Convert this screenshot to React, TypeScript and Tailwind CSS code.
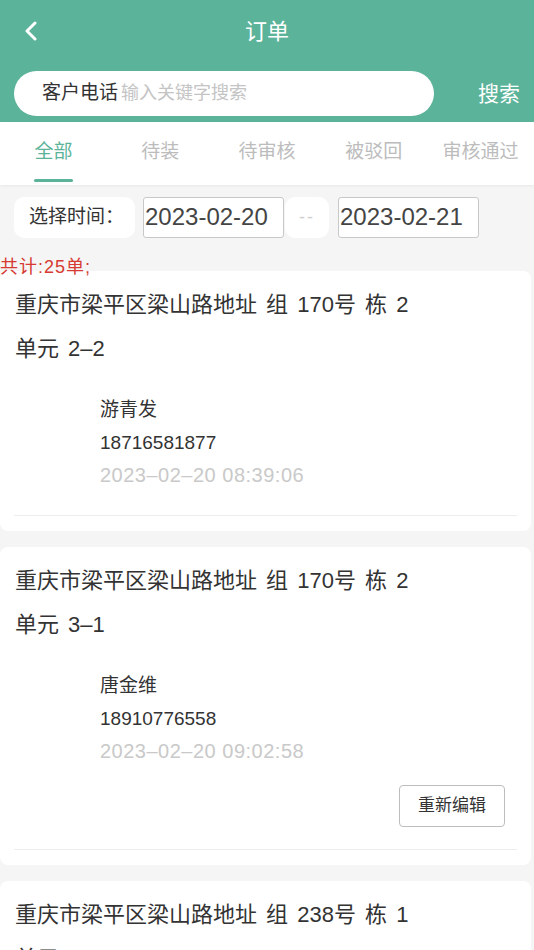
import React from 'react'

type Order = {
  address: string
  unit: string
  name: string
  phone: string
  time: string
  canEdit?: boolean
}

const orders: Order[] = [
  { address: '重庆市梁平区梁山路地址 组 170号 栋 2', unit: '单元 2–2', name: '游青发', phone: '18716581877', time: '2023–02–20 08:39:06' },
  { address: '重庆市梁平区梁山路地址 组 170号 栋 2', unit: '单元 3–1', name: '唐金维', phone: '18910776558', time: '2023–02–20 09:02:58', canEdit: true },
  { address: '重庆市梁平区梁山路地址 组 238号 栋 1', unit: '单元 2–1', name: '李华', phone: '13908231456', time: '2023–02–20 10:15:32' },
]

const tabs = ['全部', '待装', '待审核', '被驳回', '审核通过']

const OrderCard = ({ order }: { order: Order }) => {
  return (
    <div className='bg-white rounded-[8px] w-[531px] pt-[12px] mb-[16px]'>
      <div className='px-[15px] text-[22px] leading-[44px] text-[#333] [word-spacing:3px]'>
        <p>{order.address}</p>
        <p>{order.unit}</p>
      </div>
      <div className='pl-[100px] mt-[22px] text-[19px] leading-[33px]'>
        <p className='text-[#333]'>{order.name}</p>
        <p className='text-[#333]'>{order.phone}</p>
        <p className='text-[20px] tracking-[0.5px] text-[#c9c9c9]'>{order.time}</p>
      </div>
      {order.canEdit ? (
        <div className='flex justify-end pr-[26px] mt-[17px] mb-[22px]'>
          <button className='w-[106px] h-[42px] border border-[#bdbdbd] rounded-[4px] text-[17px] text-[#333] bg-white'>重新编辑</button>
        </div>
      ) : (
        <div className='h-[23px]'></div>
      )}
      <div className='mx-[14px] h-px bg-[#ededed]'></div>
      <div className='h-[15px]'></div>
    </div>
  )
}

const App = () => {
  return (
    <div className='w-[534px] h-[950px] overflow-hidden bg-[#f5f5f5]' style={{ fontFamily: '"Liberation Sans", "Noto Sans CJK SC", sans-serif' }}>
      <div className='bg-[#5bb39a] h-[122px]'>
        <div className='relative h-[62px] flex items-center justify-center'>
          <svg className='absolute left-[23px] top-[21px]' width='16' height='20' viewBox='0 0 16 20' fill='none'>
            <path d='M12 2 L4 10 L12 18' stroke='white' strokeWidth='3' strokeLinecap='round' strokeLinejoin='round' />
          </svg>
          <h1 className='text-white text-[22px]'>订单</h1>
        </div>
        <div className='flex items-center mt-[9px]'>
          <div className='ml-[14px] w-[420px] h-[45px] bg-white rounded-full flex items-center pl-[28px]'>
            <span className='text-[19px] text-[#333]'>客户电话</span>
            <span className='text-[18px] text-[#c4c4c4] ml-[3px]'>输入关键字搜索</span>
          </div>
          <span className='ml-auto mr-[14px] text-white text-[21px]'>搜索</span>
        </div>
      </div>

      <div className='bg-white h-[63px] grid grid-cols-5 shadow-[0_1px_3px_rgba(0,0,0,0.06)] relative'>
        {tabs.map((t, i) => (
          <div key={t} className='flex flex-col items-center justify-start pt-[17px]'>
            <span className={`text-[19px] leading-[26px] ${i === 0 ? 'text-[#5bb39a]' : 'text-[#bcbcbc]'}`}>{t}</span>
            {i === 0 && <div className='mt-[14px] w-[39px] h-[3px] bg-[#5bb39a] rounded-full'></div>}
          </div>
        ))}
      </div>

      <div className='flex items-center h-[56px] pl-[14px] pt-[8px]'>
        <div className='w-[121px] h-[41px] bg-white rounded-[10px] flex items-center pl-[15px] text-[19px] text-[#333]'>选择时间：</div>
        <div className='ml-[8px] w-[141px] h-[41px] bg-white border border-[#c8c8c8] rounded-[3px] flex items-center pl-[1px] text-[24px] text-[#444]'>2023-02-20</div>
        <div className='ml-[1px] w-[44px] h-[41px] bg-white rounded-[10px] flex items-center justify-center text-[18px] tracking-[2px] text-[#d0d0d0]'>--</div>
        <div className='ml-[9px] w-[141px] h-[41px] bg-white border border-[#c8c8c8] rounded-[3px] flex items-center pl-[1px] text-[24px] text-[#444]'>2023-02-21</div>
      </div>

      <div className='h-[30px] pt-[17px]'>
        <p className='text-[18px] leading-[18px] tracking-[1px] text-[#d63a32]'>共计:25单;</p>
      </div>

      <div>
        {orders.map((o, i) => (
          <OrderCard key={i} order={o} />
        ))}
      </div>
    </div>
  )
}

export default App
